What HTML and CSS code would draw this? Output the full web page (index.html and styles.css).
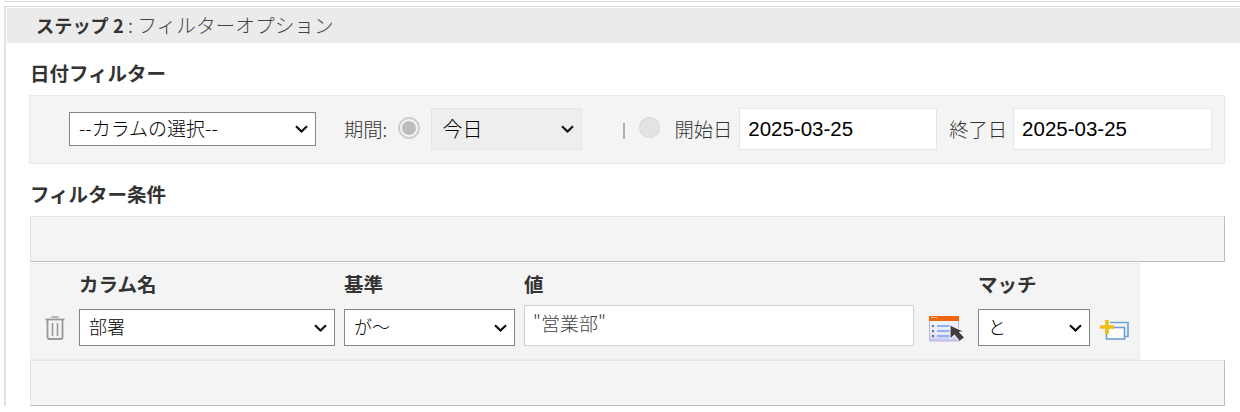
FILE: index.html
```html
<!DOCTYPE html>
<html lang="ja">
<head>
    <meta charset="UTF-8">
    <meta name="viewport" content="width=device-width, initial-scale=1.0">
    <title>フィルターオプション</title>
    <link rel="stylesheet" href="styles.css">
</head>
<body>
    <div class="top-line"></div>
    <div class="panel">
        <div class="step-title"><b>ステップ 2</b> : フィルターオプション</div>

        <h3 class="date-heading">日付フィルター</h3>
        <div class="date-box">
            <select class="column-select"><option>--カラムの選択--</option></select>
            <span class="label period-label">期間:</span>
            <span class="radio checked"></span>
            <select class="period-select"><option>今日</option></select>
            <span class="divider"></span>
            <span class="radio"></span>
            <span class="label start-label">開始日</span>
            <input class="date-input" type="text" value="2025-03-25">
            <span class="label end-label">終了日</span>
            <input class="date-input date-end" type="text" value="2025-03-25">
        </div>

        <h3 class="cond-heading">フィルター条件</h3>
        <div class="empty-box"></div>
        <div class="cond-row">
            <svg class="icon-trash" width="20" height="24" viewBox="0 0 20 24">
                <path d="M6.500 1h7" fill="none" stroke="#a8a8a8" stroke-width="1.600"/>
                <path d="M0.500 3.500h19" fill="none" stroke="#999" stroke-width="1.800"/>
                <path d="M2.500 4v17q0 2 2 2h11q2 0 2-2V4" fill="none" stroke="#999" stroke-width="1.800"/>
                <path d="M7.500 7v13M12.500 7v13" fill="none" stroke="#999" stroke-width="1.600"/>
            </svg>
            <div class="field field-name">
                <label>カラム名</label>
                <select class="cond-select"><option>部署</option></select>
            </div>
            <div class="field field-crit">
                <label>基準</label>
                <select class="cond-select"><option>が～</option></select>
            </div>
            <div class="field field-value">
                <label>値</label>
                <input class="value-input" type="text" value="&quot;営業部&quot;">
            </div>
            <svg class="icon-lookup" width="37" height="27" viewBox="0 0 37 27">
                <defs>
                    <linearGradient id="lookup-body" x1="0" y1="0" x2="0" y2="1">
                        <stop offset="0" stop-color="#f4f7fe"/>
                        <stop offset="0.700" stop-color="#e6e8fa"/>
                        <stop offset="1" stop-color="#c6bff0"/>
                    </linearGradient>
                </defs>
                <rect x="0.500" y="2" width="29" height="23" fill="url(#lookup-body)" stroke="#bcb6e4"/>
                <rect x="0" y="0" width="30" height="5" fill="#f0650e"/>
                <rect x="2" y="1" width="6" height="1" fill="#fbc58a"/>
                <path d="M3 10h2M3 15h2M3 20h2" stroke="#444" stroke-width="1.400"/>
                <path d="M8 10h13M8 15h13M8 20h13" stroke="#8fb2ee" stroke-width="1.800"/>
                <path d="M21 9v14l4.500-4 5 6.500 5-4-5-5.500h5.500z" fill="#3f3f3f" stroke="#fff" stroke-width="1"/>
            </svg>
            <div class="field field-match">
                <label>マッチ</label>
                <select class="cond-select"><option>と</option></select>
            </div>
            <svg class="icon-add" width="29" height="20" viewBox="0 0 29 20">
                <path d="M10 2.500h18v14h-3" fill="none" stroke="#6b9fd6" stroke-width="1.600"/>
                <rect x="6.500" y="7.500" width="18" height="11.500" fill="#fff" stroke="#6b9fd6" stroke-width="1.600"/>
                <path d="M7 0v14M0 7h14" stroke="#f4bb12" stroke-width="3.600"/>
            </svg>
        </div>
        <div class="empty-box"></div>
    </div>
</body>
</html>
```
FILE: styles.css
```css
body {
    margin: 0;
    font-family: "Noto Sans CJK JP", "Liberation Sans", sans-serif;
    color: #333;
    background-color: #fff;
    overflow: hidden;
}
.top-line {
    height: 1px;
    margin: 1px 0 4px 4px;
    background-color: #dcdcdc;
}
.panel {
    margin-left: 4px;
    padding: 1px 0 0 1px;
    border-top: 1px solid #dcdcdc;
    border-left: 2px solid #e3e3e3;
}
.step-title {
    height: 35px;
    line-height: 33px;
    padding-left: 29px;
    font-size: 19.700px;
    font-weight: 300;
    color: #444;
    background-color: #ebebeb;
}
.step-title b {
    font-size: 18.200px;
    font-weight: bold;
    color: #333;
}
h3 {
    margin: 0;
    font-size: 19.500px;
    line-height: 24px;
    color: #333;
}
.date-heading {
    margin: 18px 0 10px 23px;
}
.date-box {
    display: flex;
    align-items: center;
    width: 1196px;
    height: 69px;
    box-sizing: border-box;
    margin-left: 22px;
    padding: 0 0 2px 39px;
    background-color: #f4f4f4;
    border: 1px solid #e8e8e8;
}
.label {
    font-size: 19.300px;
    font-weight: 300;
    color: #333;
}
select {
    appearance: none;
    font-family: inherit;
    font-size: 18px;
    color: #000;
    box-sizing: border-box;
    border-radius: 0;
    background-image: url("data:image/svg+xml,%3Csvg xmlns='http://www.w3.org/2000/svg' width='13' height='8' viewBox='0 0 13 8'%3E%3Cpath d='M1 1.200l5.500 5.300L12 1.200' fill='none' stroke='%23111' stroke-width='2.200'/%3E%3C/svg%3E");
    background-repeat: no-repeat;
    background-position: right 7px center;
}
.column-select {
    width: 247px;
    height: 34px;
    padding: 0 0 2px 9px;
    font-size: 19px;
    font-weight: 300;
    background-color: #fff;
    border: 1px solid #858585;
}
.period-label {
    margin-left: 28px;
}
.radio {
    width: 14px;
    height: 14px;
    margin: 0 0 2px 13px;
    border-radius: 50%;
    background-color: #bdbdbd;
    border: 2px solid #f4f4f4;
    box-shadow: 0 0 0 2px #cfcfcf;
}
.radio:not(.checked) {
    margin-left: 15px;
    width: 19px;
    height: 19px;
    box-sizing: border-box;
    border: none;
    background-color: #e3e3e3;
    box-shadow: 0 0 0 1px #d8d8d8;
}
.period-select {
    width: 151px;
    height: 42px;
    margin-left: 13px;
    padding-left: 10px;
    font-size: 20px;
    font-weight: 300;
    background-color: #eeeeee;
    border: 1px solid #e6e6e6;
}
.divider {
    width: 2px;
    height: 16px;
    margin: 5px 0 0 41px;
    background-color: #b0aeb0;
}
.start-label {
    margin-left: 15px;
}
.end-label {
    margin-left: 12px;
}
.date-input {
    width: 198px;
    height: 42px;
    box-sizing: border-box;
    margin-left: 7px;
    padding: 0 8px;
    font-family: "Liberation Sans", sans-serif;
    font-size: 20.500px;
    color: #000;
    background-color: #fff;
    border: 1px solid #e6e6e6;
}
.date-end {
    width: 199px;
    margin-left: 6px;
}
.cond-heading {
    margin: 18px 0 10px 23px;
}
.empty-box {
    width: 1195px;
    height: 46px;
    box-sizing: border-box;
    margin-left: 23px;
    background-color: #f4f4f4;
    border: 1px solid #e3e3e3;
    border-bottom: 1px solid #bdbdbd;
    border-right: 1px solid #bdbdbd;
}
.cond-row {
    display: flex;
    align-items: flex-end;
    width: 1110px;
    height: 97px;
    box-sizing: border-box;
    margin: 1px 0 0 23px;
    padding: 0 0 13px 14px;
    background-color: #f4f4f4;
    border: 1px solid #ebebeb;
}
.field {
    display: flex;
    flex-direction: column;
    justify-content: space-between;
    height: 74px;
}
.field label {
    font-size: 19.500px;
    font-weight: bold;
    line-height: 24px;
    color: #333;
}
.cond-select {
    height: 37px;
    padding: 0 0 3px 9px;
    font-weight: 300;
    background-color: #fff;
    border: 1px solid #858585;
}
.field-name .cond-select { width: 256px; }
.field-crit .cond-select { width: 171px; }
.field-match .cond-select { width: 112px; }
.field-name { margin-left: 14px; }
.field-crit { margin-left: 9px; }
.field-value { margin-left: 9px; }
.field-match { margin-left: 12px; }
.value-input {
    width: 390px;
    height: 41px;
    box-sizing: border-box;
    padding: 0 8px 7px;
    font-family: inherit;
    font-size: 19px;
    font-weight: 300;
    color: #444;
    background-color: #fff;
    border: 1px solid #d0d0d0;
}
.icon-trash { margin-bottom: 6px; }
.icon-lookup { margin: 0 0 3px 15px; }
.icon-add { margin: 0 0 6px 10px; }
```
